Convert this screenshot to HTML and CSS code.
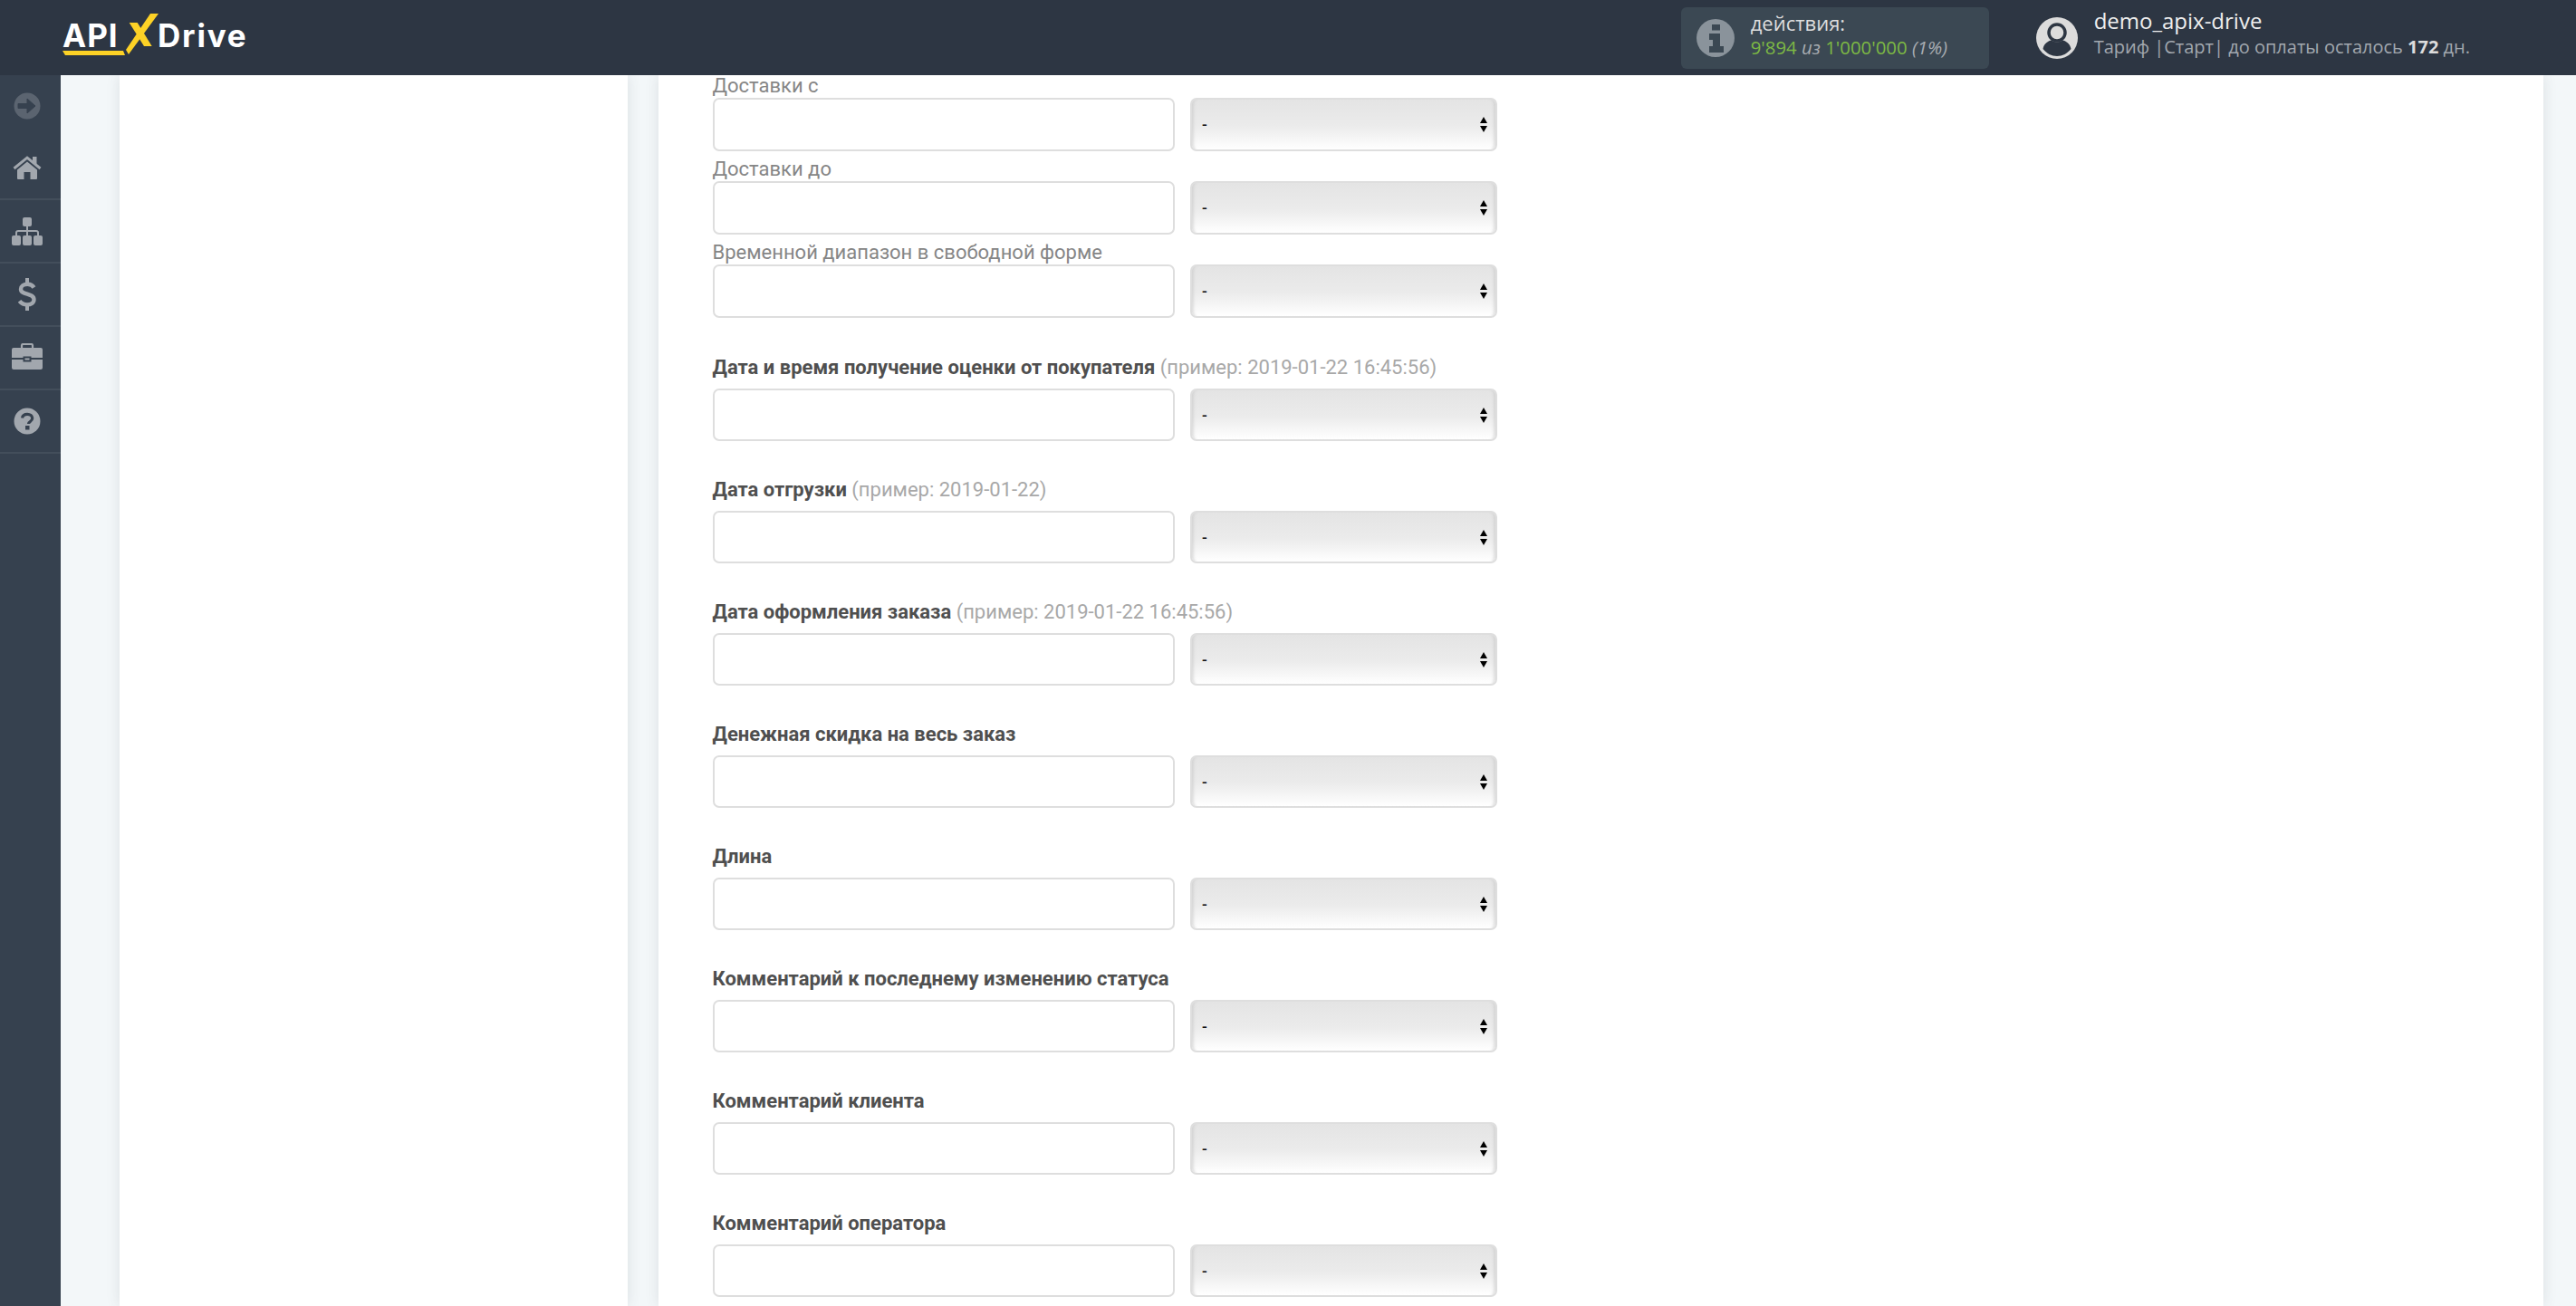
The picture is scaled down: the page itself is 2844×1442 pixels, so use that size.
FILE: index.html
```html
<!DOCTYPE html>
<html lang="ru">
<head>
<meta charset="utf-8">
<title>ApiX-Drive</title>
<link rel="stylesheet" href="styles.css">
</head>
<body>
<header class="topbar">
  <a class="logo" href="#">
    <span class="logo-api">API</span>
    <svg class="logo-x" viewBox="0 0 36 45" width="36" height="45" aria-hidden="true">
      <polygon fill="#fdd226" points="27,0 36,0 3,45 0,40"/>
      <polygon fill="#fdd226" points="3.700,10 12.700,10 28.700,36 20,36"/>
    </svg>
    <span class="logo-drive">Drive</span>
    <svg class="logo-line" viewBox="0 0 70 7" width="70" height="7" aria-hidden="true">
      <polygon fill="#fdd226" points="0,1 67,1 69,6 3,6"/>
    </svg>
  </a>
  <div class="account">
    <div class="actions">
      <svg class="info-icon" viewBox="0 0 42 42" width="42" height="42" aria-hidden="true">
        <circle cx="21" cy="21" r="21" fill="#8a939b"/>
        <rect x="17" y="6" width="9" height="6.500" fill="#3b4853"/>
        <path d="M14 16h12v14h4v7H14v-7h4v-7h-4z" fill="#3b4853"/>
      </svg>
      <div class="actions-text">
        <div class="actions-title">действия:</div>
        <div class="actions-count"><span class="green">9'894</span> <i>из</i> <span class="green">1'000'000</span> <i>(1%)</i></div>
      </div>
    </div>
    <div class="user">
      <svg class="avatar" viewBox="0 0 46 46" width="46" height="46" aria-hidden="true">
        <circle cx="23" cy="23" r="23" fill="#dcdcdc"/>
        <circle cx="23" cy="17" r="9" fill="none" stroke="#2d3643" stroke-width="3.500"/>
        <path d="M7.500 35c1-6 6-9 9.500-9.500 3 2.500 9 2.500 12 0 3.500.5 8.500 3.500 9.500 9.500-4 5-9.500 8-15.500 8s-11.500-3-15.500-8z" fill="#2d3643"/>
      </svg>
      <div class="user-text">
        <div class="user-name">demo_apix-drive</div>
        <div class="user-plan">Тариф |Старт| до оплаты осталось <b>172</b> дн.</div>
      </div>
    </div>
  </div>
</header>
<div class="layout">
  <nav class="sidebar">
    <a class="nav-item nav-toggle" href="#">
      <svg viewBox="0 0 30 30" width="30" height="30" aria-hidden="true">
        <circle cx="15" cy="15" r="14.500" fill="#5b6470"/>
        <path d="M5 12.500h10V7l9 8-9 8v-5.500H5z" fill="#36414f" stroke="#36414f" stroke-linejoin="round"/>
      </svg>
    </a>
    <a class="nav-item" href="#">
      <svg viewBox="0 0 32 26" width="32" height="26" aria-hidden="true">
        <path d="M1.500 14 16 2.200 30.500 14" fill="none" stroke="#a2a7ae" stroke-width="3"/>
        <rect x="22" y="1" width="4.500" height="8" fill="#a2a7ae"/>
        <path d="M5 15.500 16 6.500l11 9V25a1 1 0 0 1-1 1h-6.500v-8h-7v8H6a1 1 0 0 1-1-1z" fill="#a2a7ae"/>
      </svg>
    </a>
    <a class="nav-item" href="#">
      <svg viewBox="0 0 34 31" width="34" height="31" aria-hidden="true">
        <rect x="12" y="0" width="10" height="10" rx="2" fill="#a2a7ae"/>
        <rect x="0" y="20" width="10" height="11" rx="2" fill="#a2a7ae"/>
        <rect x="12" y="20" width="10" height="11" rx="2" fill="#a2a7ae"/>
        <rect x="24" y="20" width="10" height="11" rx="2" fill="#a2a7ae"/>
        <path d="M17 10v10M5 20v-3a2 2 0 0 1 2-2h20a2 2 0 0 1 2 2v3" fill="none" stroke="#a2a7ae" stroke-width="2"/>
      </svg>
    </a>
    <a class="nav-item" href="#">
      <svg viewBox="0 0 20 36" width="20" height="36" aria-hidden="true">
        <path d="M17.500 10.500C16 8 13.500 6.800 10.500 6.800 6 6.800 3 9 3 12.200c0 7 14.500 4 14.500 11.600 0 3.400-3.300 5.600-7.500 5.600-3.500 0-6.700-1.500-8.500-4" fill="none" stroke="#a2a7ae" stroke-width="4.400"/>
        <path d="M10 0v7M10 29v7" stroke="#a2a7ae" stroke-width="4"/>
      </svg>
    </a>
    <a class="nav-item nav-case" href="#">
      <svg viewBox="0 0 34 29" width="34" height="29" aria-hidden="true">
        <path d="M11 5V2.500A1.500 1.500 0 0 1 12.500 1h9A1.500 1.500 0 0 1 23 2.500V5" fill="none" stroke="#a2a7ae" stroke-width="2.200"/>
        <path d="M2 5h30a2 2 0 0 1 2 2v9H21.500v-1.500h-9V16H0V7a2 2 0 0 1 2-2z" fill="#a2a7ae"/>
        <path d="M0 18h12.500v2.500h9V18H34v9a2 2 0 0 1-2 2H2a2 2 0 0 1-2-2z" fill="#a2a7ae"/>
        <rect x="14.500" y="16.500" width="5" height="2" fill="#a2a7ae"/>
      </svg>
    </a>
    <a class="nav-item" href="#">
      <svg viewBox="0 0 30 30" width="30" height="30" aria-hidden="true">
        <circle cx="15" cy="15" r="14.500" fill="#a2a7ae"/>
        <path d="M9.500 11.500c.5-2.800 2.800-4.200 5.600-4.200 3.200 0 5.600 1.800 5.600 4.500 0 3.700-4.200 3.500-4.200 6.200" fill="none" stroke="#36414f" stroke-width="3.200"/>
        <rect x="13" y="20" width="4.500" height="4.500" fill="#36414f"/>
      </svg>
    </a>
  </nav>
  <main class="content">
    <aside class="card card-side"></aside>
    <section class="card card-main">
      <form class="fields">
        <div class="field"><label class="label">Доставки с</label><div class="controls"><input class="text-input" type="text"><div class="select-wrap"><select class="select"><option>-</option></select></div></div></div>
        <div class="field"><label class="label">Доставки до</label><div class="controls"><input class="text-input" type="text"><div class="select-wrap"><select class="select"><option>-</option></select></div></div></div>
        <div class="field field-end"><label class="label">Временной диапазон в свободной форме</label><div class="controls"><input class="text-input" type="text"><div class="select-wrap"><select class="select"><option>-</option></select></div></div></div>
        <div class="field field-bold"><label class="label">Дата и время получение оценки от покупателя <span class="hint">(пример: 2019-01-22 16:45:56)</span></label><div class="controls"><input class="text-input" type="text"><div class="select-wrap"><select class="select"><option>-</option></select></div></div></div>
        <div class="field field-bold"><label class="label">Дата отгрузки <span class="hint">(пример: 2019-01-22)</span></label><div class="controls"><input class="text-input" type="text"><div class="select-wrap"><select class="select"><option>-</option></select></div></div></div>
        <div class="field field-bold"><label class="label">Дата оформления заказа <span class="hint">(пример: 2019-01-22 16:45:56)</span></label><div class="controls"><input class="text-input" type="text"><div class="select-wrap"><select class="select"><option>-</option></select></div></div></div>
        <div class="field field-bold"><label class="label">Денежная скидка на весь заказ</label><div class="controls"><input class="text-input" type="text"><div class="select-wrap"><select class="select"><option>-</option></select></div></div></div>
        <div class="field field-bold"><label class="label">Длина</label><div class="controls"><input class="text-input" type="text"><div class="select-wrap"><select class="select"><option>-</option></select></div></div></div>
        <div class="field field-bold"><label class="label">Комментарий к последнему изменению статуса</label><div class="controls"><input class="text-input" type="text"><div class="select-wrap"><select class="select"><option>-</option></select></div></div></div>
        <div class="field field-bold"><label class="label">Комментарий клиента</label><div class="controls"><input class="text-input" type="text"><div class="select-wrap"><select class="select"><option>-</option></select></div></div></div>
        <div class="field field-bold"><label class="label">Комментарий оператора</label><div class="controls"><input class="text-input" type="text"><div class="select-wrap"><select class="select"><option>-</option></select></div></div></div>
      </form>
    </section>
  </main>
</div>
</body>
</html>
```
FILE: styles.css
```css
* { box-sizing: border-box; }
html, body { height: 100%; }
body {
  margin: 0;
  display: flex;
  flex-direction: column;
  overflow: hidden;
  font-family: Roboto, "Liberation Sans", sans-serif;
  background: #f3f7f9;
}

/* top bar */
.topbar {
  flex: 0 0 83px;
  display: flex;
  align-items: center;
  justify-content: space-between;
  background: #2d3643;
  position: relative;
  z-index: 2;
}
.logo {
  position: relative;
  display: flex;
  align-items: center;
  margin-left: 69px;
  height: 83px;
  color: #fff;
  text-decoration: none;
  font-family: Inter, "Open Sans", sans-serif;
  font-weight: 700;
  font-size: 35px;
}
.logo-api { width: 71px; position: relative; top: -2.500px; letter-spacing: 1px; }
.logo-x { position: absolute; left: 70px; top: 15px; }
.logo-drive { position: relative; top: -2.500px; margin-left: 34px; letter-spacing: 1.800px; }
.logo-line { position: absolute; left: 0; top: 55px; }

.account {
  display: flex;
  align-items: center;
  font-family: "Open Sans", sans-serif;
  margin-right: 117px;
}
.actions {
  display: flex;
  align-items: center;
  width: 340px;
  height: 68px;
  padding-left: 17px;
  gap: 18px;
  background: #3b4853;
  border-radius: 6px;
}
.actions-text { position: relative; top: -3.500px; }
.actions-title { font-size: 22px; line-height: 28px; color: #dedede; }
.actions-count { font-size: 20.400px; line-height: 26px; color: #a9adb2; white-space: nowrap; }
.green { color: #7db944; }
.user {
  display: flex;
  align-items: center;
  margin-left: 52px;
  gap: 18px;
}
.user-text { position: relative; top: -6px; }
.user-name { font-size: 24px; line-height: 32px; color: #eee; }
.user-plan { font-size: 20px; line-height: 26px; color: #a2a8af; white-space: nowrap; }
.user-plan b { color: #dcdcdc; }

/* layout */
.layout { flex: 1; display: flex; min-height: 0; }
.sidebar {
  flex: 0 0 67px;
  background: #36414f;
}
.nav-item {
  display: flex;
  align-items: center;
  justify-content: center;
  height: 70px;
  padding-right: 8px;
  border-bottom: 2px solid #434e5b;
}
.nav-toggle { height: 68px; border-bottom: 0; }
.nav-case { padding-bottom: 3px; }

.content {
  flex: 1;
  display: flex;
  min-width: 0;
  gap: 34px;
  padding: 0 36px 0 65px;
}
.card { background: #fff; box-shadow: 0 0 14px rgba(60, 70, 80, .13); }
.card-side { flex: 0 0 561px; }
.card-main { flex: 1; min-width: 0; overflow: hidden; padding-left: 60px; }

/* form */
.fields { margin-top: -8.500px; }
.field { font-size: 22px; }
.field-end { padding-bottom: 1.500px; }
.label {
  display: block;
  height: 33.500px;
  margin-left: -0.500px;
  padding-top: 6px;
  line-height: 27.500px;
  color: #868686;
}
.field-bold { margin-top: 34px; }
.field-bold .label {
  margin-bottom: 9px;
  font-weight: 700;
  color: #4f4f4f;
}
.hint { font-weight: 400; color: #a8a8a8; }
.controls { display: flex; gap: 17px; }
.text-input {
  width: 510px;
  height: 58.500px;
  border: 2px solid #dedede;
  border-radius: 7px;
  background: #fff;
}
.select-wrap { position: relative; width: 339px; height: 58.500px; }
.select-wrap::before,
.select-wrap::after {
  content: "";
  position: absolute;
  right: 11px;
  width: 0;
  height: 0;
  border-left: 4px solid transparent;
  border-right: 4px solid transparent;
  pointer-events: none;
}
.select-wrap::before { top: 21px; border-bottom: 7px solid #000; }
.select-wrap::after { top: 31px; border-top: 7px solid #000; }
.select {
  appearance: none;
  width: 100%;
  height: 100%;
  padding: 0 0 0 11px;
  border: 2px solid #dedede;
  border-radius: 7px;
  font-family: Roboto, sans-serif;
  font-size: 17px;
  font-weight: 500;
  color: #111;
  background: linear-gradient(#e4e4e4, #ebebeb 52%, #f3f3f3 72%, #fff);
  box-shadow: inset 5px 0 3px -3px rgba(190,190,190,.45), inset -5px 0 3px -3px rgba(190,190,190,.45);
}
```
